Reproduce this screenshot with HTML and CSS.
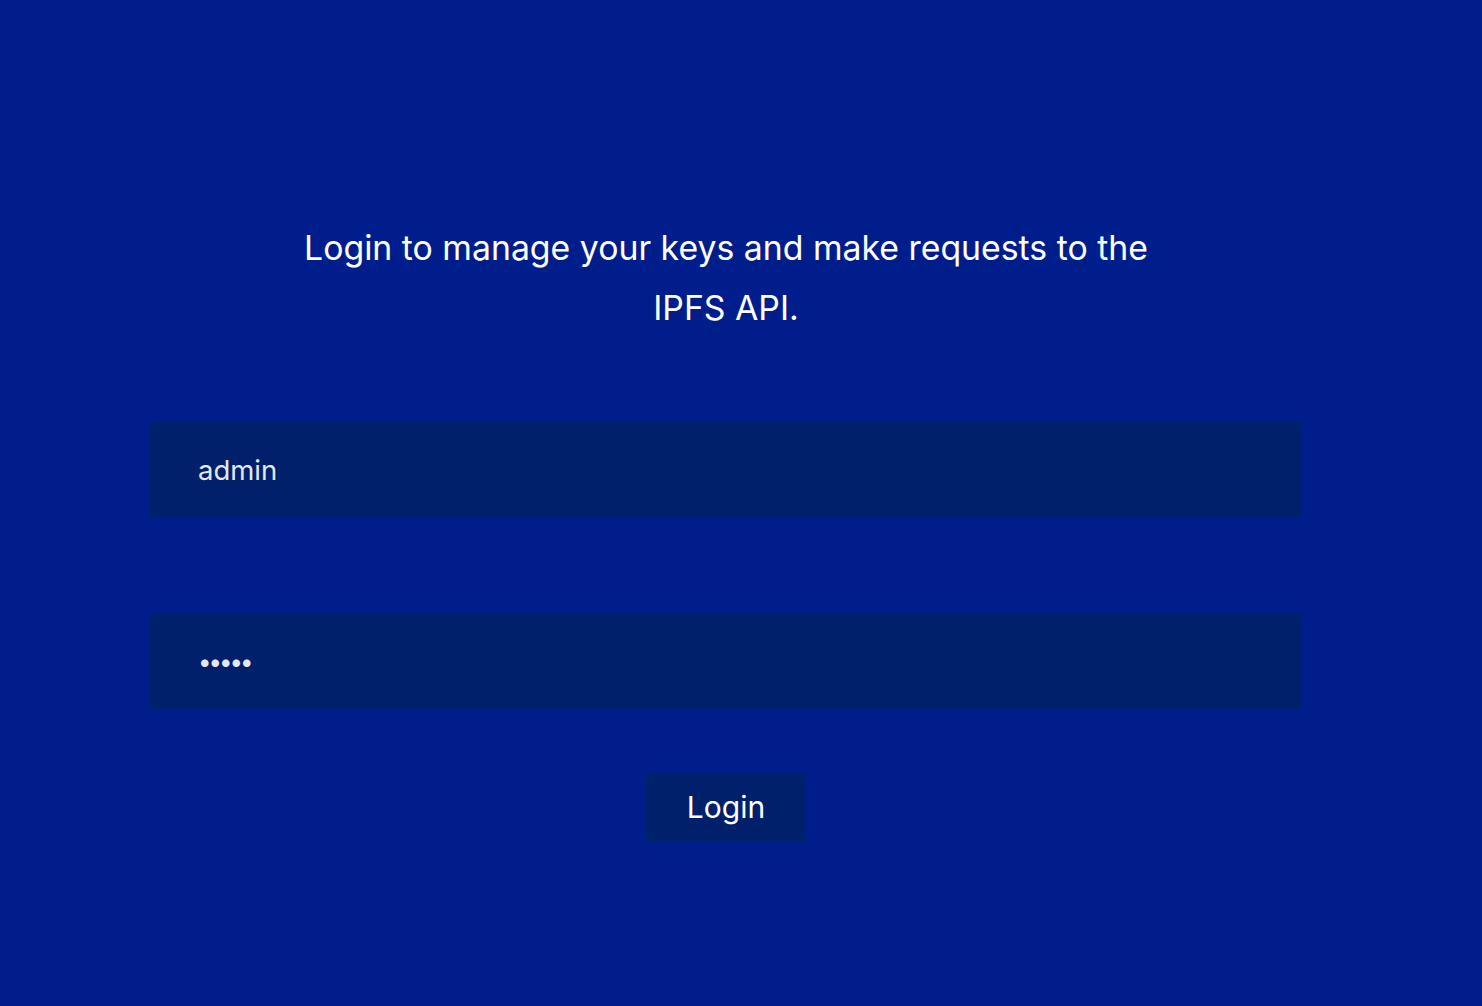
FILE: index.html
```html
<!DOCTYPE html>
<html lang="en">
<head>
<meta charset="utf-8">
<title>Login</title>
<link rel="stylesheet" href="styles.css">
</head>
<body>
<main class="page">
  <form class="login">
    <p class="intro">Login to manage your keys and make requests to the IPFS API.</p>
    <input class="field field-user" type="text" value="admin">
    <input class="field field-pass" type="password" value="admin">
    <button class="btn" type="button">Login</button>
  </form>
</main>
</body>
</html>
```

FILE: styles.css
```css
html, body {
  margin: 0;
  padding: 0;
  height: 100%;
  background: #001e8b;
}
body {
  font-family: Inter, "Noto Sans", sans-serif;
  color: #ffffff;
}
.page {
  width: 1452px;
  padding-top: 218px;
}
.login {
  display: flex;
  flex-direction: column;
  align-items: center;
  margin: 0 150px;
}
.intro {
  margin: 0;
  width: 900px;
  text-align: center;
  font-size: 33.8px;
  line-height: 60px;
  font-weight: 400;
}
.field {
  box-sizing: border-box;
  width: 100%;
  height: 96px;
  border: none;
  border-radius: 4px;
  background: #00206b;
  color: #e3e7f0;
  font-family: Inter, "Noto Sans", sans-serif;
  font-size: 27.5px;
  padding: 0 48px;
  outline: none;
}
.field-user {
  margin-top: 84px;
}
.field-pass {
  margin-top: 95px;
  font-size: 24px;
  letter-spacing: -3px;
}
.btn {
  margin-top: 64px;
  width: 160px;
  height: 68px;
  border: none;
  border-radius: 0;
  background: #00206b;
  color: #ffffff;
  font-family: Inter, "Noto Sans", sans-serif;
  font-size: 30px;
  padding: 0;
}
```
